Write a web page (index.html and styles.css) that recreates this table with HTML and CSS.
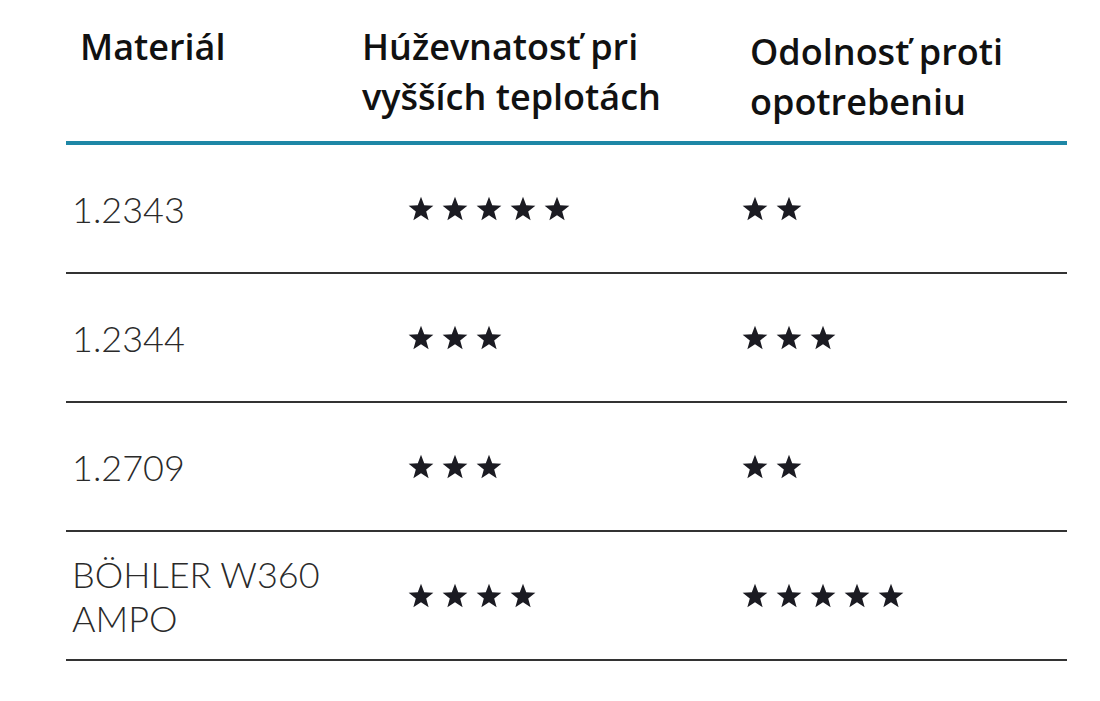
FILE: index.html
```html
<!DOCTYPE html>
<html lang="sk">
<head>
<meta charset="utf-8">
<title>Materiály</title>
<link rel="stylesheet" href="styles.css">
</head>
<body>
<svg class="defs" width="0" height="0" aria-hidden="true">
  <defs>
    <symbol id="star" viewBox="0 0 24 23">
      <polygon points="12,0.6 14.96,8.52 23.41,8.89 16.79,14.16 19.05,22.31 12,17.64 4.95,22.31 7.21,14.16 0.59,8.89 9.04,8.52"/>
    </symbol>
  </defs>
</svg>
<div class="table">
  <div class="row head">
    <div class="cell c1">Materiál</div>
    <div class="cell c2">Húževnatosť pri<br>vyšších teplotách</div>
    <div class="cell c3">Odolnosť proti<br>opotrebeniu</div>
  </div>
  <div class="row">
    <div class="cell c1">1.2343</div>
    <div class="cell c2"><span class="stars"><svg><use href="#star"/></svg><svg><use href="#star"/></svg><svg><use href="#star"/></svg><svg><use href="#star"/></svg><svg><use href="#star"/></svg></span></div>
    <div class="cell c3"><span class="stars"><svg><use href="#star"/></svg><svg><use href="#star"/></svg></span></div>
  </div>
  <div class="row">
    <div class="cell c1">1.2344</div>
    <div class="cell c2"><span class="stars"><svg><use href="#star"/></svg><svg><use href="#star"/></svg><svg><use href="#star"/></svg></span></div>
    <div class="cell c3"><span class="stars"><svg><use href="#star"/></svg><svg><use href="#star"/></svg><svg><use href="#star"/></svg></span></div>
  </div>
  <div class="row">
    <div class="cell c1">1.2709</div>
    <div class="cell c2"><span class="stars"><svg><use href="#star"/></svg><svg><use href="#star"/></svg><svg><use href="#star"/></svg></span></div>
    <div class="cell c3"><span class="stars"><svg><use href="#star"/></svg><svg><use href="#star"/></svg></span></div>
  </div>
  <div class="row">
    <div class="cell c1">BÖHLER W360<br>AMPO</div>
    <div class="cell c2"><span class="stars"><svg><use href="#star"/></svg><svg><use href="#star"/></svg><svg><use href="#star"/></svg><svg><use href="#star"/></svg></span></div>
    <div class="cell c3"><span class="stars"><svg><use href="#star"/></svg><svg><use href="#star"/></svg><svg><use href="#star"/></svg><svg><use href="#star"/></svg><svg><use href="#star"/></svg></span></div>
  </div>
</div>
</body>
</html>
```
FILE: styles.css
```css
html, body {
  margin: 0;
  padding: 0;
  background: #ffffff;
}

.defs {
  display: block;
  width: 0;
  height: 0;
  overflow: hidden;
}

.table {
  margin-left: 66px;
  width: 1001px;
  font-family: "Lato", "Liberation Sans", sans-serif;
}

.row {
  display: grid;
  grid-template-columns: 282px 390px 329px;
  height: 127px;
  border-bottom: 2px solid #333333;
  align-items: center;
}

.row.head {
  height: 141px;
  border-bottom: 4px solid #1e87a6;
  align-items: start;
}

.head .cell {
  font-family: "Open Sans", "Lato", sans-serif;
  font-weight: 600;
  font-size: 36px;
  line-height: 50px;
  color: #111111;
  padding-top: 22px;
}

.head .c1 { padding-left: 14px; }
.head .c2 { padding-left: 14px; }
.head .c3 { padding-left: 12px; padding-top: 27px; }

.cell {
  font-weight: 300;
  font-size: 36px;
  line-height: 44px;
  color: #2a2a2a;
}

.c1 { padding-left: 6px; }
.c2 { padding-left: 60px; }
.c3 { padding-left: 4px; }

.stars {
  display: flex;
  gap: 8px;
  align-items: center;
}

.stars svg {
  width: 26px;
  height: 25px;
  fill: #1b1b22;
  display: block;
}
```
